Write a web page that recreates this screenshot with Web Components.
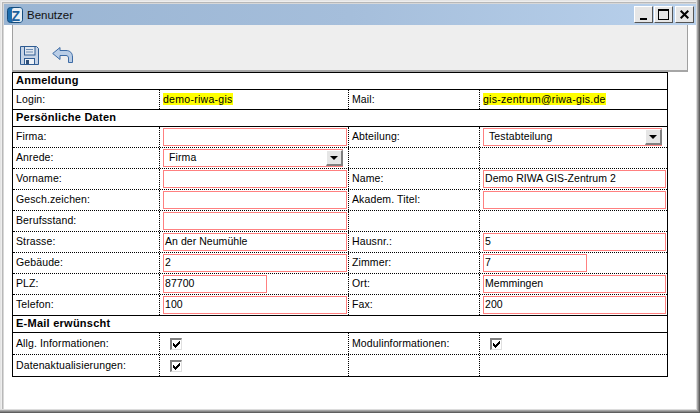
<!DOCTYPE html>
<html><head><meta charset="utf-8"><style>
html,body{margin:0;padding:0;background:#fff;}
body{font:11px "Liberation Sans",Arial,sans-serif;color:#000;}
</style></head><body>
<benutzer-window>
  <title-bar>Benutzer</title-bar>
  <tool-bar></tool-bar>
  <form-table>
    <section-row>Anmeldung</section-row>
    <form-row h="20" label="Login:" label2="Mail:" last><hl-text slot="v1">demo-riwa-gis</hl-text><hl-text slot="v2">gis-zentrum@riwa-gis.de</hl-text></form-row>
    <section-row>Persönliche Daten</section-row>
    <form-row label="Firma:" label2="Abteilung:"><text-in slot="v1"></text-in><select-in slot="v2" w="179">Testabteilung</select-in></form-row>
    <form-row label="Anrede:" label2=""><select-in slot="v1" w="180">Firma</select-in></form-row>
    <form-row label="Vorname:" label2="Name:"><text-in slot="v1"></text-in><text-in slot="v2" w="183">Demo RIWA GIS-Zentrum 2</text-in></form-row>
    <form-row label="Gesch.zeichen:" label2="Akadem. Titel:"><text-in slot="v1"></text-in><text-in slot="v2" w="183"></text-in></form-row>
    <form-row label="Berufsstand:" label2=""><text-in slot="v1"></text-in></form-row>
    <form-row label="Strasse:" label2="Hausnr.:"><text-in slot="v1">An der Neumühle</text-in><text-in slot="v2" w="183">5</text-in></form-row>
    <form-row label="Gebäude:" label2="Zimmer:"><text-in slot="v1">2</text-in><text-in slot="v2" w="104">7</text-in></form-row>
    <form-row label="PLZ:" label2="Ort:"><text-in slot="v1" w="104">87700</text-in><text-in slot="v2" w="183">Memmingen</text-in></form-row>
    <form-row label="Telefon:" label2="Fax:" last><text-in slot="v1">100</text-in><text-in slot="v2" w="183">200</text-in></form-row>
    <section-row>E-Mail erwünscht</section-row>
    <form-row h="22" label="Allg. Informationen:" label2="Modulinformationen:"><check-box slot="v1"></check-box><check-box slot="v2"></check-box></form-row>
    <form-row h="22" label="Datenaktualisierungen:" label2="" last><check-box slot="v1"></check-box></form-row>
  </form-table>
</benutzer-window>
<script>
function def(name,css,html){
  customElements.define(name,class extends HTMLElement{
    constructor(){super();this.attachShadow({mode:'open'});}
    connectedCallback(){
      const h=typeof html==='function'?html(this):html;
      const c=typeof css==='function'?css(this):css;
      this.shadowRoot.innerHTML='<style>'+c+'</style>'+h;
    }
  });
}
def('benutzer-window',`:host{display:flex;flex-direction:column;box-sizing:border-box;width:700px;height:413px;overflow:hidden;padding:4px;background:#fff;
  box-shadow:inset -1px -1px 0 #5e5e5e,inset -2px -2px 0 #858585,inset -3px -3px 0 #a6a6a6,inset -4px -4px 0 #dcdcdc,
  inset 1px 1px 0 #e4e4e4,inset 2px 2px 0 #eeeeee,inset 3px 3px 0 #b8b8b8,inset 4px 4px 0 #d8d8d8;}`,
  `<slot></slot>`);
def('title-bar',`:host{display:flex;align-items:center;flex:none;height:21px;background:linear-gradient(90deg,#9ab5d3 0%,#a5bedb 50%,#b9d1ec 100%);font:11.5px "Liberation Sans",Arial,sans-serif;}
  svg{margin:0 4px 0 3px;flex:none}
  .t{flex:1;color:#111;padding-top:1px}
  .b{box-sizing:border-box;width:19px;height:17px;margin-right:1px;background:#e6e6e6;border:1px solid;border-color:#fff #555 #555 #fff;display:flex;align-items:center;justify-content:center;}`,
  `<svg width="16" height="16" viewBox="0 0 16 16"><rect x=".5" y=".5" width="15" height="15" rx="3" fill="#1d6fb0" stroke="#164c7c"/><rect x="5" y="1" width="10" height="14" rx="2" fill="#e8eef4"/><text x="4.500" y="13.500" font-family="Liberation Sans" font-size="14" font-weight="700" fill="#1c5f9c">Z</text></svg>
  <span class="t"><slot></slot></span>
  <span class="b"><svg width="7" height="13" style="margin:0"><rect x="0" y="10" width="7" height="2"/></svg></span>
  <span class="b"><svg width="11" height="11" style="margin:0"><rect x=".5" y=".5" width="10" height="10" fill="none" stroke="#000"/><rect x="0" y="0" width="11" height="2"/></svg></span>
  <span class="b" style="margin-right:2px;margin-left:1px"><svg width="9" height="9" style="margin:0"><path d="M.7 .7l7.600 7.600M8.300 .7L.7 8.300" stroke="#000" stroke-width="2" fill="none"/></svg></span>`);
def('tool-bar',`:host{display:flex;align-items:flex-end;gap:13px;flex:none;box-sizing:border-box;height:47px;margin:0 8px;padding:0 0 5px 7px;background:#eee;border-left:1px solid #a0a0a0;border-right:1px solid #a0a0a0;border-bottom:2px solid #a6a6a6;}
  svg{display:block}`,
  `<svg width="19" height="19" viewBox="0 0 19 19"><path d="M.5 .5h16l2 2v16h-18z" fill="#c5d3e6" stroke="#2f5c93"/><rect x="4.500" y=".5" width="10.500" height="8.500" fill="#dfe6ef" stroke="#2f5c93"/><path d="M6 3.500h7M6 6h7" stroke="#6d8cb3"/><rect x="4.500" y="12.500" width="10" height="6" fill="#eef2f7" stroke="#2f5c93"/><rect x="6" y="14" width="3" height="4" fill="#2f4f78"/></svg>
  <svg width="21" height="16" viewBox="0 0 21 16" style="margin-bottom:2px"><path d="M.7 6.500L8 .5v3h6c4 0 6.500 2.500 6.500 6.500v5.500h-4V11c0-1.500-1-2.500-2.500-2.500H8v4z" fill="#b9cde6" stroke="#3d6ba5" stroke-linejoin="round"/></svg>`);
def('form-table',`:host{display:block;flex:none;box-sizing:border-box;width:656px;margin:0 0 0 8px;border:1px solid #000;border-bottom:none;}`,`<slot></slot>`);
def('section-row',`:host{display:flex;align-items:center;box-sizing:border-box;height:17px;padding:0 0 2px 3px;font-weight:700;font-size:11px;letter-spacing:.25px;border-bottom:1px solid #000}`,`<slot></slot>`);
def('form-row',t=>`:host{display:grid;grid-template-columns:147px 189px 131px 1fr;box-sizing:border-box;height:${t.getAttribute('h')||21}px;border-bottom:1px dotted #000;font-size:10.5px;letter-spacing:.12px}
  :host([last]){border-bottom:1px solid #000}
  .l,.v{display:flex;align-items:center;padding-left:3px;border-right:1px dotted #000;box-sizing:border-box;min-width:0;white-space:nowrap}
  .l{padding-bottom:2px}
  .v.e{border-right:none}`,
  t=>`<div class="l">${t.getAttribute('label')}</div><div class="v"><slot name="v1"></slot></div><div class="l">${t.getAttribute('label2')}</div><div class="v e"><slot name="v2"></slot></div>`);
def('hl-text',`:host{display:inline-block;background:#ff0;line-height:12px;letter-spacing:.28px;margin-bottom:1px}`,`<slot></slot>`);
def('text-in',t=>`:host{display:flex;align-items:center;box-sizing:border-box;width:${t.getAttribute('w')||184}px;height:18px;border:1px solid #ff8080;padding:0 0 2px 1px;background:#fff;letter-spacing:.05px}`,`<slot></slot>`);
def('select-in',t=>`:host{display:flex;align-items:center;justify-content:space-between;box-sizing:border-box;width:${t.getAttribute('w')||179}px;height:18px;border:1px solid #ff8080;border-right:none;padding-left:5px;background:#fff}
  .t{margin-bottom:3px}
  .b{box-sizing:border-box;width:17px;height:16px;background:#e6e6e6;border:1px solid;border-color:#fff #808080 #808080 #fff;border-right-width:2px;border-bottom-width:2px;display:flex;align-items:center;justify-content:center}
  .a{width:0;height:0;border:4px solid transparent;border-top:4px solid #000;border-bottom:0}`,
  `<span class="t"><slot></slot></span><span class="b"><span class="a"></span></span>`);
def('check-box',`:host{display:block;box-sizing:border-box;width:12px;height:12px;margin-left:7px;background:#fff;border:1px solid #e0e0e0;border-top:2px solid #808080;border-left:2px solid #808080}
  svg{display:block}`,
  `<svg width="9" height="9" viewBox="0 0 9 9" shape-rendering="crispEdges"><path d="M1 3H2V4H3V5H4V4H5V3H6V2H7V1H8V4H7V5H6V6H5V7H4V8H3V7H2V6H1Z" fill="#000"/></svg>`);
</script>
</body></html>
